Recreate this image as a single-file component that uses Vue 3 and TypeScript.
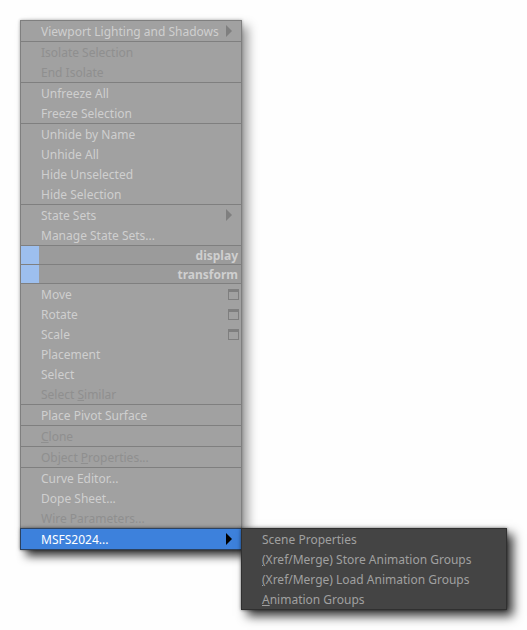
<script setup lang="ts">
import { ref } from 'vue'

interface Item {
  label: string
  key?: number
  disabled?: boolean
  mark?: 'arrow' | 'box'
}

interface Section {
  title?: string
  items: Item[]
}

const sections: Section[] = [
  { items: [{ label: 'Viewport Lighting and Shadows', mark: 'arrow' }] },
  { items: [{ label: 'Isolate Selection', disabled: true }, { label: 'End Isolate', disabled: true }] },
  { items: [{ label: 'Unfreeze All' }, { label: 'Freeze Selection' }] },
  {
    items: [
      { label: 'Unhide by Name' },
      { label: 'Unhide All' },
      { label: 'Hide Unselected' },
      { label: 'Hide Selection' },
    ],
  },
  { items: [{ label: 'State Sets', mark: 'arrow' }, { label: 'Manage State Sets...' }] },
  { title: 'display', items: [] },
  { title: 'transform', items: [] },
  {
    items: [
      { label: 'Move', mark: 'box' },
      { label: 'Rotate', mark: 'box' },
      { label: 'Scale', mark: 'box' },
      { label: 'Placement' },
      { label: 'Select' },
      { label: 'Select Similar', key: 7, disabled: true },
    ],
  },
  { items: [{ label: 'Place Pivot Surface' }] },
  { items: [{ label: 'Clone', key: 0, disabled: true }] },
  { items: [{ label: 'Object Properties...', key: 7, disabled: true }] },
  {
    items: [
      { label: 'Curve Editor...' },
      { label: 'Dope Sheet...' },
      { label: 'Wire Parameters...', disabled: true },
    ],
  },
]

const submenu: Item[] = [
  { label: 'Scene Properties' },
  { label: '(Xref/Merge) Store Animation Groups', key: 0 },
  { label: '(Xref/Merge) Load Animation Groups', key: 0 },
  { label: 'Animation Groups', key: 0 },
]

const open = ref(true)

function parts(item: Item): [string, string, string] {
  if (item.key === undefined) return [item.label, '', '']
  const k = item.key
  return [item.label.slice(0, k), item.label.charAt(k), item.label.slice(k + 1)]
}
</script>

<template>
  <main class="page">
    <nav class="menu">
      <div class="faded">
        <section v-for="(section, i) in sections" :key="i" class="section">
          <h2 v-if="section.title" class="title">{{ section.title }}</h2>
          <button
            v-for="item in section.items"
            :key="item.label"
            type="button"
            class="item"
            :disabled="item.disabled"
          >
            <span class="label">{{ parts(item)[0] }}<u v-if="parts(item)[1]">{{ parts(item)[1] }}</u>{{ parts(item)[2] }}</span>
            <svg v-if="item.mark === 'arrow'" class="arrow" viewBox="0 0 6 12" aria-hidden="true">
              <path d="M0 0L6 6L0 12Z" />
            </svg>
            <svg v-if="item.mark === 'box'" class="box" viewBox="0 0 11 11" aria-hidden="true">
              <path d="M0 0H11V11H0ZM1 3V10H10V3Z" fill-rule="evenodd" />
            </svg>
          </button>
        </section>
      </div>
      <div class="branch">
        <button type="button" class="item active" :aria-expanded="open" @click="open = !open">
          <span class="label">MSFS2024...</span>
          <svg class="arrow" viewBox="0 0 6 12" aria-hidden="true">
            <path d="M0 0L6 6L0 12Z" />
          </svg>
        </button>
        <div v-if="open" class="submenu">
          <button v-for="item in submenu" :key="item.label" type="button" class="item sub">
            <span class="label">{{ parts(item)[0] }}<u v-if="parts(item)[1]">{{ parts(item)[1] }}</u>{{ parts(item)[2] }}</span>
          </button>
        </div>
      </div>
    </nav>
  </main>
</template>

<style>
body {
  background: #fefefe;
}
</style>

<style scoped>
.page {
  box-sizing: border-box;
  min-height: 100vh;
  padding: 20px;
  font-family: "Noto Sans", "Open Sans", sans-serif;
  font-size: 12px;
}

.menu {
  box-sizing: border-box;
  width: max-content;
  min-width: 222px;
}

.faded {
  border: 1px solid #7f7f7f;
  border-bottom: 0;
  background: #a1a1a1;
  box-shadow: 6px 6px 10px rgba(0, 0, 0, 0.38), 0 0 3px rgba(0, 0, 0, 0.3);
}

.section + .section {
  border-top: 1px solid #7f7f7f;
}

.item {
  display: flex;
  align-items: center;
  box-sizing: border-box;
  width: 100%;
  height: 20px;
  margin: 0;
  padding: 0 2px 0 20px;
  border: 0;
  background: transparent;
  color: #cfcfcf;
  font: inherit;
  text-align: left;
  white-space: nowrap;
}

.item:disabled {
  color: #8f8f8f;
}

.label {
  flex: 1;
  padding-top: 2px;
  line-height: 18px;
}

u {
  text-underline-offset: 1px;
}

.arrow {
  width: 6px;
  height: 12px;
  margin-right: 7px;
  fill: #7f7f7f;
}

.box {
  width: 11px;
  height: 11px;
  fill: #7f7f7f;
}

.title {
  box-sizing: border-box;
  height: 18px;
  margin: 0;
  padding: 2px 3px 0 0;
  border-left: 18px solid #9dbfee;
  background: #9b9b9b;
  color: #cfcfcf;
  font-size: 12px;
  font-weight: bold;
  line-height: 16px;
  text-align: right;
}

.branch {
  position: relative;
  border: 1px solid #2c4260;
  background: #3d81dc;
  box-shadow: 6px 6px 10px rgba(0, 0, 0, 0.8), 0 0 3px rgba(0, 0, 0, 0.5);
}

.active {
  color: #ffffff;
}

.active .arrow {
  fill: #000000;
}

.submenu {
  position: absolute;
  top: -1px;
  left: 100%;
  box-sizing: border-box;
  width: max-content;
  min-width: 266px;
  border: 1px solid #303030;
  background: #444444;
  box-shadow: 6px 6px 10px rgba(0, 0, 0, 0.8), 0 0 3px rgba(0, 0, 0, 0.5);
}

.sub {
  color: #a0a0a0;
}
</style>
